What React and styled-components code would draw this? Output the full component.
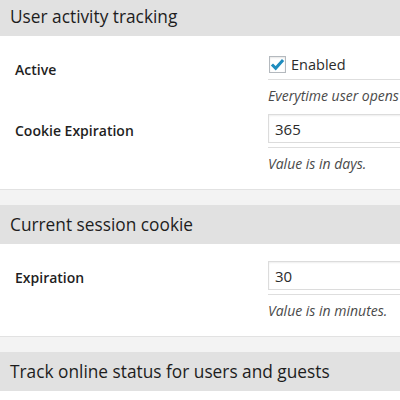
import React from 'react';
import styled, { createGlobalStyle } from 'styled-components';

const GlobalStyle = createGlobalStyle`
    html, body {
        margin: 0;
        padding: 0;
        background: #fff;
        overflow: hidden;
    }
    body {
        font-family: "Open Sans", "Noto Sans", sans-serif;
        color: #23282d;
    }
`;

const sections = [
    {
        title: 'User activity tracking',
        rows: [
            { label: 'Active', type: 'checkbox', value: 'Enabled', note: 'Everytime user opens a page the last activity time is saved.' },
            { label: 'Cookie Expiration', type: 'input', value: '365', note: 'Value is in days.' },
        ],
    },
    {
        title: 'Current session cookie',
        rows: [{ label: 'Expiration', type: 'input', value: '30', note: 'Value is in minutes.' }],
    },
    {
        title: 'Track online status for users and guests',
        rows: [],
    },
];

const Checkmark = () => (
    <svg width="15" height="15" viewBox="0 0 14 14">
        <path d="M1.8 7 L5.3 10.6 L12.2 2.8" fill="none" stroke="#1e8cbe" strokeWidth="2.8" />
    </svg>
);

const Field = ({ row }) => (
    <FieldCol>
        {row.type === 'checkbox' ? (
            <CheckLabel>
                <Box>
                    <Checkmark />
                </Box>
                {row.value}
            </CheckLabel>
        ) : (
            <TextInput defaultValue={row.value} />
        )}
        <Separator />
        <Note>{row.note}</Note>
    </FieldCol>
);

export default function App() {
    return (
        <Page>
            <GlobalStyle />
            {sections.map((section) => (
                <section key={section.title}>
                    <Heading>{section.title}</Heading>
                    {section.rows.length > 0 ? (
                        <Body>
                            {section.rows.map((row) => (
                                <Row key={row.label}>
                                    <Label>{row.label}</Label>
                                    <Field row={row} />
                                </Row>
                            ))}
                        </Body>
                    ) : null}
                </section>
            ))}
        </Page>
    );
}

const Page = styled.div`
    margin-top: -3px;
    width: 640px;
`;

const Heading = styled.h2`
    margin: 0;
    height: 39px;
    line-height: 39px;
    padding-left: 10px;
    background: #e1e1e1;
    font-size: 17.3px;
    font-weight: 400;
    color: #1d1d1d;
    white-space: nowrap;
`;

const Body = styled.div`
    background: #fff;
    padding: 17px 0 15px;
    border-bottom: 1px solid #e2e2e2;
    margin-bottom: 15px;
    display: flex;
    flex-direction: column;
    gap: 8px;
    box-shadow: 0 16px 0 0 #f3f3f3;
`;

const Row = styled.div`
    display: flex;
    align-items: flex-start;
`;

const Label = styled.div`
    width: 253px;
    padding: 7px 0 0 15px;
    line-height: 20px;
    font-size: 14px;
    font-weight: 600;
    color: #1f1f1f;
`;

const FieldCol = styled.div`
    flex: 1;
    display: flex;
    flex-direction: column;
`;

const CheckLabel = styled.label`
    display: flex;
    align-items: center;
    gap: 5px;
    height: 22px;
    font-size: 14.5px;
    color: #2b2b2b;
`;

const Box = styled.span`
    width: 17px;
    height: 17px;
    box-sizing: border-box;
    border: 1px solid #b4b9be;
    background: #fff;
    box-shadow: inset 0 1px 2px rgba(0, 0, 0, 0.1);
    display: flex;
    align-items: center;
    justify-content: center;
    margin-left: 1px;
`;

const TextInput = styled.input`
    box-sizing: border-box;
    width: 100%;
    height: 29px;
    margin: 0;
    padding: 0 6px;
    border: 1px solid #dcdcdc;
    box-shadow: inset 0 1px 2px rgba(0, 0, 0, 0.07);
    font-family: inherit;
    font-size: 15px;
    color: #2b2b2b;
    outline: none;
`;

const Separator = styled.div`
    height: 1px;
    margin-top: 4px;
    background: #dedede;
`;

const Note = styled.p`
    margin: 6px 0 0;
    line-height: 20px;
    font-size: 14px;
    font-style: italic;
    color: #4a4a4a;
    white-space: nowrap;
`;
